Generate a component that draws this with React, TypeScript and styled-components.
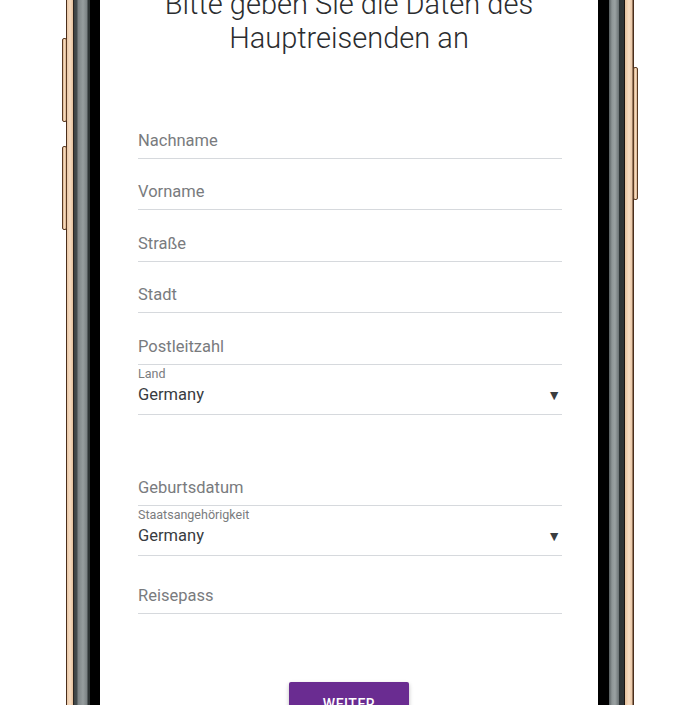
import React from "react";
import styled, { createGlobalStyle } from "styled-components";

const Global = createGlobalStyle`
  html, body { margin: 0; padding: 0; background: #ffffff; }
  body { font-family: Roboto, "Liberation Sans", Arial, sans-serif; }
  * { box-sizing: border-box; }
`;

const Page = styled.div`
  width: 700px;
  height: 705px;
  overflow: hidden;
  background: #ffffff;
  display: flex;
  padding-left: 66px;
`;

const Phone = styled.div`
  position: relative;
  display: flex;
  width: 568px;
  height: 705px;
`;

const Bezel = styled.div<{ $side: "left" | "right" }>`
  flex: none;
  width: ${(p) => (p.$side === "left" ? 34 : 36)}px;
  background: ${(p) =>
    p.$side === "left"
      ? `linear-gradient(to right,
          #4a2e1c 0px, #4a2e1c 1px,
          #e9c7a6 1px, #f6dcc2 4px, #e4c09c 7px,
          #2b2420 7px, #2b2420 8px,
          #3b4244 8px, #454c4e 11px,
          #7d8486 12px, #979e9f 17px, #7b8284 21px,
          #2d3334 22px, #2d3334 24px,
          #000 24px, #000 34px)`
      : `linear-gradient(to right,
          #000 0px, #000 11px,
          #555c5e 11px, #8f9697 14px, #9aa1a2 17px, #6a7173 21px,
          #2e3436 21px, #2e3436 26px,
          #1a1410 26px, #1a1410 27px,
          #e4c09c 27px, #f6dcc2 31px, #e9c7a6 34px,
          #4a2e1c 35px, #4a2e1c 36px)`};
`;

const SideButton = styled.div<{ $left: number; $top: number; $h: number }>`
  position: absolute;
  left: ${(p) => p.$left}px;
  top: ${(p) => p.$top}px;
  width: 5px;
  height: ${(p) => p.$h}px;
  border-radius: 2px;
  background: linear-gradient(to right, #d9b28c, #f4d9bd, #d9b28c);
  border: 1px solid #5a3a22;
`;

const Screen = styled.div`
  flex: 1;
  background: #ffffff;
  display: flex;
  flex-direction: column;
  align-items: stretch;
`;

const Title = styled.h1`
  margin: -13px 0 0;
  padding: 0 10px;
  font-family: Roboto, "Liberation Sans", sans-serif;
  font-weight: 300;
  font-size: 29px;
  line-height: 34px;
  color: #2b2d2f;
  text-align: center;
`;

const Form = styled.form`
  display: flex;
  flex-direction: column;
  margin-top: 52px;
  padding: 0 36px 0 38px;
`;

const InputRow = styled.div<{ $h: number; $mt?: number }>`
  height: ${(p) => p.$h}px;
  margin-top: ${(p) => p.$mt ?? 0}px;
  display: flex;
  align-items: flex-end;
  padding-bottom: 8px;
  border-bottom: 1px solid #d6d9dd;
`;

const Placeholder = styled.span`
  font-size: 16.5px;
  line-height: 19px;
  color: #797b7e;
  font-weight: 400;
`;

const SelectRow = styled.div<{ $h: number }>`
  height: ${(p) => p.$h}px;
  display: flex;
  flex-direction: column;
  padding-top: 1px;
  border-bottom: 1px solid #d6d9dd;
`;

const SmallLabel = styled.span`
  font-size: 12.5px;
  line-height: 15px;
  color: #7a7c7e;
`;

const SelectValueLine = styled.div`
  display: flex;
  align-items: center;
  justify-content: space-between;
  margin-top: 4px;
`;

const SelectValue = styled.span`
  font-size: 16.5px;
  line-height: 20px;
  color: #383b3f;
`;

const Arrow = styled.span`
  font-size: 14px;
  color: #3a3d40;
  margin-right: 1px;
`;

const ButtonWrap = styled.div`
  display: flex;
  justify-content: center;
  margin-top: 68px;
`;

const Button = styled.button`
  width: 120px;
  height: 44px;
  border: none;
  border-radius: 2px;
  background: #6a2c91;
  color: #ffffff;
  font-family: Roboto, "Liberation Sans", sans-serif;
  font-size: 14px;
  font-weight: 500;
  letter-spacing: 0.5px;
  box-shadow: 0 2px 4px rgba(0, 0, 0, 0.25);
`;

const TextField = ({ label, h, mt }: { label: string; h: number; mt?: number }) => (
  <InputRow $h={h} $mt={mt}>
    <Placeholder>{label}</Placeholder>
  </InputRow>
);

const SelectField = ({ label, value, h }: { label: string; value: string; h: number }) => (
  <SelectRow $h={h}>
    <SmallLabel>{label}</SmallLabel>
    <SelectValueLine>
      <SelectValue>{value}</SelectValue>
      <Arrow>▼</Arrow>
    </SelectValueLine>
  </SelectRow>
);

export default function App() {
  return (
    <>
      <Global />
      <Page>
        <Phone>
          <SideButton $left={-4} $top={38} $h={84} />
          <SideButton $left={-4} $top={146} $h={84} />
          <SideButton $left={567} $top={67} $h={133} />
          <Bezel $side="left" />
          <Screen>
            <Title>Bitte geben Sie die Daten des Hauptreisenden an</Title>
            <Form>
              <TextField label="Nachname" h={51.5} />
              <TextField label="Vorname" h={51.5} />
              <TextField label="Straße" h={51.5} />
              <TextField label="Stadt" h={51.5} />
              <TextField label="Postleitzahl" h={51.5} />
              <SelectField label="Land" value="Germany" h={50} />
              <TextField label="Geburtsdatum" h={51} mt={40} />
              <SelectField label="Staatsangehörigkeit" value="Germany" h={50} />
              <TextField label="Reisepass" h={58} />
            </Form>
            <ButtonWrap>
              <Button type="button">WEITER</Button>
            </ButtonWrap>
          </Screen>
          <Bezel $side="right" />
        </Phone>
      </Page>
    </>
  );
}
